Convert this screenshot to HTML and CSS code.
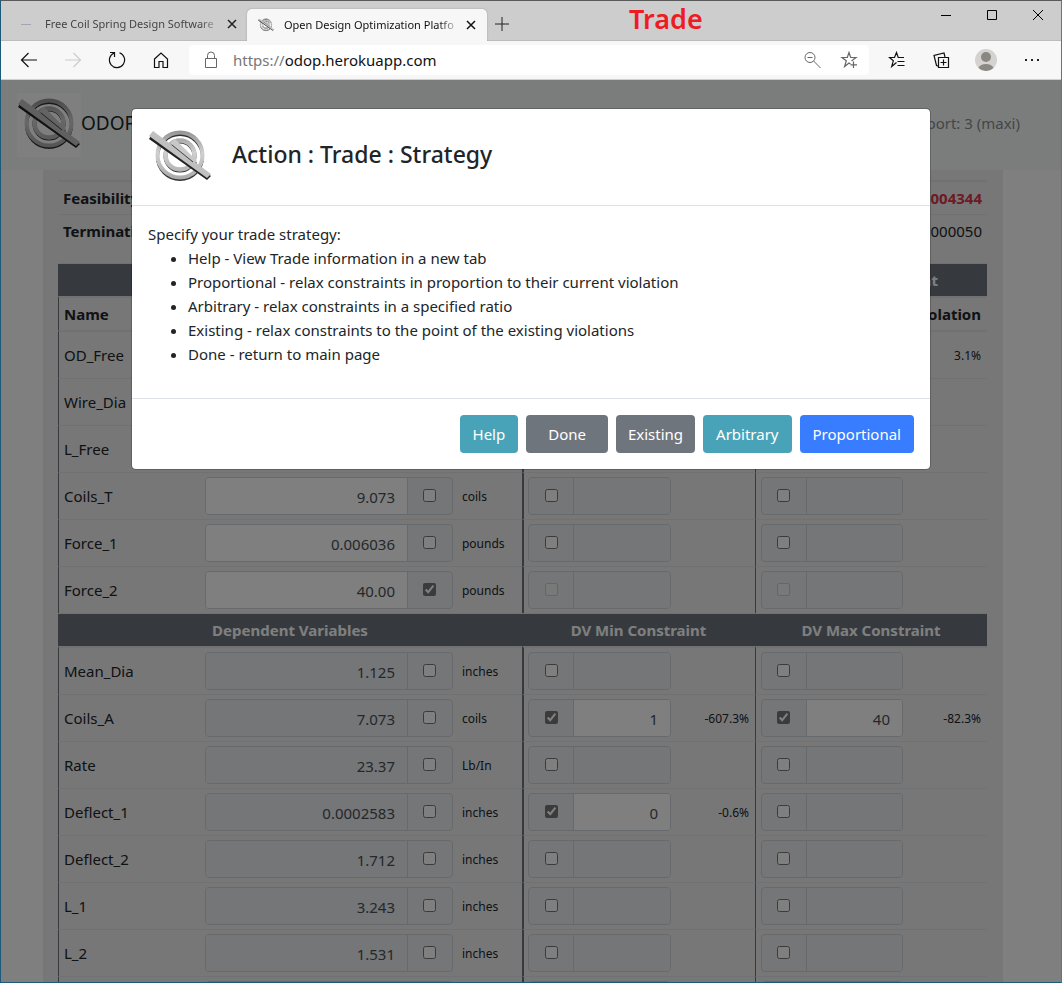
FILE: index.html
```html
<!DOCTYPE html>
<html lang="en">
<head>
<meta charset="utf-8">
<title>Open Design Optimization Platform</title>
<link rel="stylesheet" href="styles.css">
</head>
<body>
<svg class="defs" aria-hidden="true">
  <defs>
    <linearGradient id="metal" gradientUnits="userSpaceOnUse" x1="0" y1="6" x2="0" y2="54"><stop offset="0" stop-color="#949494"/><stop offset=".45" stop-color="#d0d0d0"/><stop offset="1" stop-color="#aaa"/></linearGradient>
  </defs>
  <symbol id="logo" viewBox="0 0 64 64">
    <g fill="none" stroke="#333">
      <circle cx="32" cy="32" r="22.500" stroke-width="3"/>
      <circle cx="32" cy="31" r="14.500" stroke-width="4"/>
    </g>
    <g fill="none" stroke="url(#metal)">
      <circle cx="32" cy="30" r="22.500" stroke-width="4"/>
      <circle cx="32" cy="30" r="14.500" stroke-width="4.500"/>
    </g>
    <path d="M27 15L49 38L44 43L22 19Z" fill="#333"/>
    <path d="M27 14L49 36L44 41L22 18Z" fill="#c8c8c8"/>
    <path d="M4 9L63 51L59 55L1 14Z" fill="#222"/>
    <path d="M5 6L63 49L59 53L1 11Z" fill="#c0c0c0"/>
    <path d="M24 20L45 37" stroke="#444"/>
  </symbol>
</svg>
<div class="window">
  <header class="titlebar">
    <div class="tab">
      <span class="tab-dash"></span>
      <span class="tab-label">Free Coil Spring Design Software</span>
      <button class="icon-btn tab-close" aria-label="Close tab"><svg width="10" height="10" viewBox="0 0 10 10"><path d="M1 1L9 9M9 1L1 9" stroke="#222" stroke-width="1.500"/></svg></button>
    </div>
    <div class="tab tab-active">
      <svg class="tab-icon" width="16" height="16"><use href="#logo"/></svg>
      <span class="tab-label">Open Design Optimization Platfo</span>
      <button class="icon-btn tab-close" aria-label="Close tab"><svg width="10" height="10" viewBox="0 0 10 10"><path d="M1 1L9 9M9 1L1 9" stroke="#111" stroke-width="1.500"/></svg></button>
    </div>
    <button class="icon-btn new-tab" aria-label="New tab"><svg width="14" height="14" viewBox="0 0 14 14"><path d="M7 0V14M0 7H14" stroke="#222"/></svg></button>
    <strong class="caption">Trade</strong>
    <div class="controls">
      <button class="icon-btn" aria-label="Minimize"><svg width="12" height="12" viewBox="0 0 12 12"><path d="M1 6.500H11" stroke="#000"/></svg></button>
      <button class="icon-btn" aria-label="Maximize"><svg width="12" height="12" viewBox="0 0 12 12"><path d="M1.500 1.500H10.500V10.500H1.500Z" fill="none" stroke="#000"/></svg></button>
      <button class="icon-btn" aria-label="Close"><svg width="12" height="12" viewBox="0 0 12 12"><path d="M1 1L11 11M11 1L1 11" stroke="#000"/></svg></button>
    </div>
  </header>
  <div class="toolbar">
    <button class="icon-btn" aria-label="Back"><svg width="18" height="18" viewBox="0 0 18 18"><path d="M17 9H1.500M8.500 2L1.500 9L8.500 16" fill="none" stroke="#111" stroke-width="1.200"/></svg></button>
    <button class="icon-btn" aria-label="Forward"><svg width="18" height="18" viewBox="0 0 18 18"><path d="M1 9H16.500M9.500 2L16.500 9L9.500 16" fill="none" stroke="#ccc" stroke-width="1.200"/></svg></button>
    <button class="icon-btn" aria-label="Reload"><svg width="18" height="18" viewBox="0 0 18 18"><path d="M11.500 1.800A7.600 7.600 0 1 1 6 2M2 1.500H6.500V6" fill="none" stroke="#111" stroke-width="1.200"/></svg></button>
    <button class="icon-btn" aria-label="Home"><svg width="18" height="18" viewBox="0 0 18 18"><path d="M2.500 8L9 2L15.500 8V16.500H11V10.500H7V16.500H2.500Z" fill="none" stroke="#111" stroke-width="1.200"/></svg></button>
    <div class="address">
      <svg width="14" height="18" viewBox="0 0 14 18"><path d="M1.500 7.500H12.500V16.500H1.500ZM3.500 7V4.500A3.500 3.500 0 0 1 10.500 4.500V7" fill="none" stroke="#666"/></svg>
      <span class="url"><span class="scheme">https://</span>odop.herokuapp.com</span>
      <button class="icon-btn" aria-label="Zoom out"><svg width="18" height="18" viewBox="0 0 18 18"><path d="M11 6.500A5 5 0 1 1 1 6.500A5 5 0 1 1 11 6.500M3.500 6.500H8.500M9.600 10L16.500 17" fill="none" stroke="#666"/></svg></button>
      <button class="icon-btn" aria-label="Add to favorites"><svg width="18" height="18" viewBox="0 0 18 18"><path d="M12.500 10L12 9.500L16 6.500H10.700L9 1.500L7.300 6.500H2L6.300 9.700L4.600 15.500L9 12L10.500 13M13.500 10.500V17M10.500 13.800H17" fill="none" stroke="#666" stroke-width="1.200"/></svg></button>
    </div>
    <button class="icon-btn" aria-label="Favorites"><svg width="18" height="18" viewBox="0 0 18 18"><path d="M8.500 11.500L3.700 15.500L5.300 9.800L1.500 6.500H6.500L8.500 1.500L10.200 6.500H16M9.500 10.500H16.500M9.500 14.500H16.500" fill="none" stroke="#111" stroke-width="1.200"/></svg></button>
    <button class="icon-btn" aria-label="Collections"><svg width="18" height="18" viewBox="0 0 18 18"><path d="M6.500 6.500H16.500V16.500H6.500ZM11.500 8.500V14.500M8.500 11.500H14.500M6 15L4.500 14.500L2 4.500L12 2L13 6" fill="none" stroke="#111" stroke-width="1.200"/></svg></button>
    <button class="icon-btn" aria-label="Profile"><svg width="24" height="24" viewBox="0 0 24 24"><circle cx="12" cy="12" r="11" fill="#d4d3d0"/><circle cx="12" cy="9" r="5" fill="#8b8783"/><path d="M4.500 20A8 6 0 0 1 19.500 20A11 11 0 0 1 4.500 20Z" fill="#8b8783"/></svg></button>
    <button class="icon-btn" aria-label="More"><svg width="18" height="18" viewBox="0 0 18 18"><path d="M2 8H4V10H2ZM8 8H10V10H8ZM14 8H16V10H14Z" fill="#222"/></svg></button>
  </div>
  <div class="viewport">
    <nav class="navbar">
      <span class="brand-box"><svg width="64" height="64"><use href="#logo"/></svg></span>
      <span class="brand">ODOP</span>
      <span class="report">Report: 3 (maxi)</span>
    </nav>
    <main class="container">
      <table class="summary">
        <tr><th>Feasibility</th><td class="bad">0.004344</td></tr>
        <tr><th>Termination</th><td>0.000050</td></tr>
      </table>
      <table class="sheet">
        <colgroup><col><col class="c-value"><col class="c-unit"><col class="c-min"><col class="c-viol"><col class="c-max"><col class="c-viol"></colgroup>
        <tbody id="rows"></tbody>
      </table>
    </main>
    <div class="backdrop"></div>
    <section class="modal" role="dialog" aria-labelledby="modal-title">
      <header class="modal-head">
        <svg width="64" height="64"><use href="#logo"/></svg>
        <h1 id="modal-title">Action : Trade : Strategy</h1>
      </header>
      <div class="modal-body">
        Specify your trade strategy:
        <ul>
          <li>Help - View Trade information in a new tab</li>
          <li>Proportional - relax constraints in proportion to their current violation</li>
          <li>Arbitrary - relax constraints in a specified ratio</li>
          <li>Existing - relax constraints to the point of the existing violations</li>
          <li>Done - return to main page</li>
        </ul>
      </div>
      <footer class="modal-foot">
        <button class="btn info">Help</button>
        <button class="btn secondary wide">Done</button>
        <button class="btn secondary">Existing</button>
        <button class="btn info">Arbitrary</button>
        <button class="btn primary">Proportional</button>
      </footer>
    </section>
  </div>
</div>
<script src="sheet.js"></script>
</body>
</html>
```
FILE: styles.css
```css
* { box-sizing: border-box; }
body { margin: 0; font: 15px/24px "Noto Sans", "Open Sans", sans-serif; color: #212529; }
.defs { position: absolute; width: 0; height: 0; }
.window { height: 100vh; display: flex; flex-direction: column; border: 1px solid #1b5a78; border-top-color: #5a5a5a; border-right-color: #6d7478; overflow: hidden; }
svg { display: block; flex: none; }
.icon-btn { border: 0; padding: 0; background: none; display: flex; align-items: center; justify-content: center; flex: none; }

.titlebar { height: 40px; flex: none; display: flex; align-items: flex-end; background: #cdcdcd; border-bottom: 1px solid #bcbcbc; }
.tab { width: 246px; height: 32px; padding: 0 9px 0 20px; display: flex; align-items: center; font-size: 11px; line-height: 32px; color: #444; }
.tab-active { width: 240px; padding: 0 10px 0 11px; background: #f7f7f7; border-radius: 5px 5px 0 0; color: #111; margin-bottom: -1px; box-shadow: 0 0 2px #999; }
.tab-dash { width: 10px; height: 1px; background: #a9a1b5; margin-right: 14px; }
.tab-icon { margin-right: 10px; }
.tab-label { flex: 1; overflow: hidden; white-space: nowrap; mask-image: linear-gradient(to right, #000 88%, transparent); }
.tab-close { width: 12px; margin-left: 5px; }
.new-tab { width: 30px; height: 32px; }
.caption { margin: 0 0 0 112px; align-self: flex-start; font-size: 27px; line-height: 36px; font-weight: 600; color: #ed1c24; }
.controls { margin-left: auto; align-self: flex-start; display: flex; }
.controls .icon-btn { width: 46px; height: 28px; }

.toolbar { height: 39px; flex: none; display: flex; align-items: center; background: #f7f7f7; border-bottom: 1px solid #d0d0d0; padding: 0 6px; }
.toolbar > .icon-btn { width: 44px; }
.toolbar > .address + .icon-btn { margin-left: 6px; }
.toolbar > .icon-btn:nth-last-child(2) { width: 46px; }
.toolbar > .icon-btn:last-child { width: 46px; }
.address { flex: 1; height: 30px; margin-left: 6px; padding: 0 11px 0 15px; display: flex; align-items: center; background: #fff; border-radius: 4px; }
.url { flex: 1; margin-left: 15px; color: #111; }
.scheme { color: #777; }
.address .icon-btn { margin-left: 18px; }

.viewport { position: relative; flex: 1; min-height: 0; overflow: hidden; background: #fff; padding-right: 16px; }
.navbar { height: 90px; margin-right: -16px; padding: 0 41px 0 16px; display: flex; align-items: center; background: #f5fbf9; }
.brand-box { background: #fff; }
.brand { font-size: 19px; padding-bottom: 4px; }
.report { margin-left: auto; padding-bottom: 5px; color: #8a8c8c; }
.container { max-width: 960px; margin: 0 auto; padding: 10px 16px 40px 15px; background: #eee; }
.viewport table { width: 100%; border-collapse: separate; border-spacing: 0; }
.summary { margin-bottom: 16px; }
.summary th, .summary td { padding: 4px 5px; border-top: 1px solid #dee2e6; text-align: left; }
.summary tr:first-child > * { border-top-width: 2px; }
.summary td { text-align: right; }
.summary .bad { color: #dc3545; font-weight: 700; }

.sheet { table-layout: fixed; }
.c-value { width: 256px; }
.c-unit { width: 65px; }
.c-min { width: 153px; }
.c-viol { width: 80px; }
.c-max { width: 152px; }
.sheet th, .sheet td { padding: 4px; border-top: 1px solid #dee2e6; text-align: left; white-space: nowrap; }
.sheet .band th { background: #6c757d; color: #fff; text-align: center; }
.sheet .band + tr > *, .sheet .names + tr > * { border-top-width: 2px; }
.sheet tr:not(.band) > :first-child { border-left: 1px solid #6c757d; padding-left: 5px; }
.sheet tr:not(.band) > .min { border-left: 2px solid #6c757d; }
.sheet tr:not(.band) > .max { border-left: 1px solid #6c757d; padding-left: 5px; }
.sheet tbody .name { font-weight: 400; }
.sheet .unit { font-size: 12px; padding: 5px 4px 3px 5px; }
.sheet .viol { font-size: 12px; text-align: right; padding: 5px 6px 3px 0; }
.sheet .names .viol { font-size: 15px; padding: 4px 6px 4px 0; }
.group { display: flex; height: 38px; border: 1px solid #ced4da; border-radius: 4px; overflow: hidden; background: #e9ecef; }
.field { flex: 1; min-width: 0; border: 0; padding: 1px 12px 0; background: #fff; font: inherit; color: #495057; text-align: right; }
.field:disabled { background: #e9ecef; }
.field.low { background: #fff; border: 1px solid #dc3545; }
.tick { width: 45px; flex: none; display: flex; align-items: center; justify-content: center; border-left: 1px solid #ced4da; padding-bottom: 2px; }
.tick:first-child { border-left: 0; border-right: 1px solid #ced4da; }
.min .tick { padding-left: 2px; }
.max .tick { padding-right: 1px; }
.tick input { margin: 0; width: 13px; height: 13px; accent-color: #767676; }

.backdrop { position: absolute; inset: 0; background: rgba(0, 0, 0, .5); }
.modal { position: absolute; top: 28px; left: 0; right: 0; max-width: 800px; margin: 0 auto; background: #fff; background-clip: padding-box; border: 1px solid rgba(0, 0, 0, .2); border-radius: 5px; }
.modal-head { display: flex; align-items: center; gap: 20px; padding: 16px; border-bottom: 1px solid #dee2e6; }
.modal-head h1 { margin: 0 0 6px; font-size: 23px; line-height: 36px; font-weight: 500; }
.modal-body { padding: 16px; }
.modal-body ul { margin: 0 0 16px; padding-left: 40px; }
.modal-foot { display: flex; justify-content: flex-end; gap: 8px; padding: 16px; border-top: 1px solid #dee2e6; }
.btn { height: 38px; padding: 0 13px; border: 0; border-radius: 4px; color: #fff; font: inherit; }
.secondary { padding: 0 12px; }
.wide { padding: 0 22px; }
.info { background: #48a3b8; }
.secondary { background: #6f757d; }
.primary { background: #387cff; }
```
FILE: sheet.js
```js
// Each row: name, value, fixed, unit, min, min violation, max, max violation, constraints locked
const independent = [
  ["OD_Free", "", false, "inches", null, "", null, "3.1%"],
  ["Wire_Dia", "", false, "inches", null, "", null, ""],
  ["L_Free", "", false, "inches", null, "", null, ""],
  ["Coils_T", "9.073", false, "coils", null, "", null, ""],
  ["Force_1", "0.006036", false, "pounds", null, "", null, ""],
  ["Force_2", "40.00", true, "pounds", null, "", null, "", true]
];
const dependent = [
  ["Mean_Dia", "1.125", false, "inches", null, "", null, ""],
  ["Coils_A", "7.073", false, "coils", "1", "-607.3%", "40", "-82.3%"],
  ["Rate", "23.37", false, "Lb/In", null, "", null, ""],
  ["Deflect_1", "0.0002583", false, "inches", "0", "-0.6%", null, ""],
  ["Deflect_2", "1.712", false, "inches", null, "", null, ""],
  ["L_1", "3.243", false, "inches", null, "", null, ""],
  ["L_2", "1.531", false, "inches", null, "", null, ""],
  ["", "", false, "", "", "", null, ""]
];

function tick(label, on, locked) {
  return `<span class="tick"><input type="checkbox" aria-label="${label}" ${on ? "checked" : ""} ${locked ? "disabled" : ""}></span>`;
}
function field(label, value, disabled) {
  const low = value === "" && !disabled && label.includes("minimum") ? " low" : "";
  return `<input class="field${low}" aria-label="${label}" value="${value ?? ""}" ${disabled ? "disabled" : ""}>`;
}
function limit(name, kind, value, locked) {
  return `<td class="${kind.slice(0, 3)}"><div class="group">${tick(`${name} ${kind} constrained`, value !== null, locked)}${field(`${name} ${kind}`, value, value === null)}</div></td>`;
}
function row([name, value, fixed, unit, min, minViol, max, maxViol, locked], readOnly) {
  return `<tr><th class="name" scope="row">${name}</th>
    <td><div class="group">${field(`${name} value`, value, readOnly)}${tick(`${name} fixed`, fixed)}</div></td>
    <td class="unit">${unit}</td>
    ${limit(name, "minimum", min, locked)}<td class="viol">${minViol}</td>
    ${limit(name, "maximum", max, locked)}<td class="viol">${maxViol}</td></tr>`;
}
function band(a, b, c) {
  return `<tr class="band"><th colspan="3">${a}</th><th colspan="2">${b}</th><th colspan="2">${c}</th></tr>`;
}

document.getElementById("rows").innerHTML =
  band("Independent Variables", "IV Min Constraint", "IV Max Constraint") +
  `<tr class="names"><th>Name</th><th>Value</th><th>Units</th><th class="min">Value</th><th class="viol">Violation</th><th class="max">Value</th><th class="viol">Violation</th></tr>` +
  independent.map(r => row(r, false)).join("") +
  band("Dependent Variables", "DV Min Constraint", "DV Max Constraint") +
  dependent.map(r => row(r, true)).join("");
```
